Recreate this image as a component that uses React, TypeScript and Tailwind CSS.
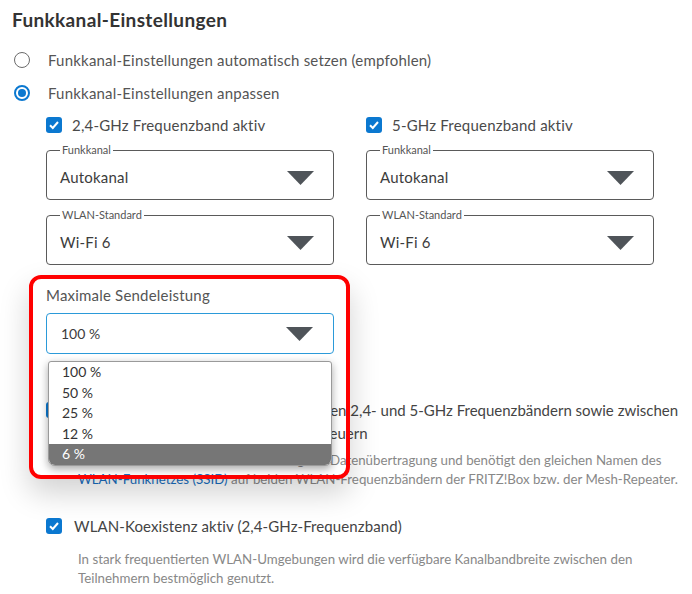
import React from "react";

const font = { fontFamily: "Lato, 'Open Sans', sans-serif" };

const Caret = () => (
  <svg width="27" height="14" viewBox="0 0 27 14" className="shrink-0">
    <polygon points="0,0 27,0 13.5,14" fill="#4f5459" />
  </svg>
);

const Check = () => (
  <span className="flex h-4 w-4 shrink-0 items-center justify-center rounded-[3px] bg-[#0b78d0]">
    <svg width="12" height="12" viewBox="0 0 12 12">
      <path d="M2 6.2 L4.8 9 L10 3" fill="none" stroke="#fff" strokeWidth="2" />
    </svg>
  </span>
);

const Radio = ({ on }: { on?: boolean }) =>
  on ? (
    <span className="flex h-4 w-4 shrink-0 items-center justify-center rounded-full border-2 border-[#0b78d0]">
      <span className="h-2 w-2 rounded-full bg-[#0b78d0]" />
    </span>
  ) : (
    <span className="h-4 w-4 shrink-0 rounded-full border-[1.5px] border-[#6b6b6b]" />
  );

const Field = ({ label, value }: { label: string; value: string }) => (
  <fieldset className="rounded-[4px] border border-[#5a5a5a] px-[13px]">
    <legend className="px-[2px] text-[11px] leading-[12px] text-[#555]">{label}</legend>
    <div className="flex h-[43px] items-center justify-between pr-[6px]">
      <span className="text-[15px] tracking-[0.2px] text-[#3c3c3c]">{value}</span>
      <Caret />
    </div>
  </fieldset>
);

const BandColumn = ({ label }: { label: string }) => (
  <div className="flex w-[288px] flex-col">
    <div className="flex h-[18px] items-center gap-[10px]">
      <Check />
      <span className="text-[15px] tracking-[0.2px] text-[#4a4a4a]">{label}</span>
    </div>
    <div className="mt-[10px]">
      <Field label="Funkkanal" value="Autokanal" />
    </div>
    <div className="mt-[9px]">
      <Field label="WLAN-Standard" value="Wi-Fi 6" />
    </div>
  </div>
);

const options = ["100 %", "50 %", "25 %", "12 %", "6 %"];

export default function App() {
  return (
    <div className="relative h-[594px] w-[692px] overflow-hidden bg-white" style={font}>
      <div className="pl-3 pt-[8px]">
        <h1 className="text-[19px] font-bold leading-[24px] tracking-[0.35px] text-[#333]">
          Funkkanal-Einstellungen
        </h1>
        <div className="mt-[19px] flex flex-col gap-[15px] pl-[2px]">
          <div className="flex h-[18px] items-center gap-[18px]">
            <Radio />
            <span className="text-[15px] tracking-[0.2px] text-[#555]">
              Funkkanal-Einstellungen automatisch setzen (empfohlen)
            </span>
          </div>
          <div className="flex h-[18px] items-center gap-[18px]">
            <Radio on />
            <span className="text-[15px] tracking-[0.2px] text-[#555]">Funkkanal-Einstellungen anpassen</span>
          </div>
        </div>
      </div>

      <div className="pl-[46px]">
        <div className="mt-[14px] flex gap-[32px]">
          <BandColumn label="2,4-GHz Frequenzband aktiv" />
          <BandColumn label="5-GHz Frequenzband aktiv" />
        </div>

        <div className="mt-[20px] w-[288px]">
          <div className="text-[15px] leading-[20px] tracking-[0.2px] text-[#555]">Maximale Sendeleistung</div>
          <div className="mt-[8px] flex h-[41px] items-center justify-between rounded-[4px] border border-[#2b9ad9] pl-[14px] pr-[20px]">
            <span className="text-[14px] text-[#3c3c3c]">100 %</span>
            <Caret />
          </div>
        </div>

        <div className="mt-[45px] flex gap-[12px]">
          <div className="mt-[3px]">
            <Check />
          </div>
          <div className="text-[15px] leading-[23px] text-[#444]">
            WLAN-Geräte automatisch zwischen den 2,4- und 5-GHz Frequenzbändern sowie zwischen
            <br />
            den Zugangspunkten im Mesh direkt steuern
          </div>
        </div>
        <p className="mt-[6px] pl-[32px] text-[13.3px] leading-[19px] text-[#888]">
          Diese Funktion dient der Verbesserung der Datenübertragung und benötigt den gleichen Namen des
          <br />
          <span className="text-[#1a6fc0]">WLAN-Funknetzes (SSID)</span> auf beiden WLAN-Frequenzbändern der
          FRITZ!Box bzw. der Mesh-Repeater.
        </p>

        <div className="mt-[26px] flex items-center gap-[12px]">
          <Check />
          <span className="text-[15px] tracking-[0.1px] text-[#444]">WLAN-Koexistenz aktiv (2,4-GHz-Frequenzband)</span>
        </div>
        <p className="mt-[12px] pl-[32px] text-[13.3px] leading-[19px] text-[#888]">
          In stark frequentierten WLAN-Umgebungen wird die verfügbare Kanalbandbreite zwischen den
          <br />
          Teilnehmern bestmöglich genutzt.
        </p>
      </div>

      {/* annotation highlight */}
      <div className="pointer-events-none absolute left-[29px] top-[275px] h-[204px] w-[321px] rounded-[12px] border-4 border-[#f00] shadow-[0_14px_30px_rgba(0,0,0,0.18)]" />

      {/* open dropdown list */}
      <ul className="absolute left-[48px] top-[361px] w-[284px] overflow-hidden rounded-b-[7px] rounded-t-[3px] border border-[#9a9a9a] bg-white shadow-[0_3px_8px_rgba(0,0,0,0.35)]">
        {options.map((o, i) => (
          <li
            key={o}
            className={
              i === options.length - 1
                ? "h-[20.5px] bg-[#767676] pl-[13px] text-[14px] leading-[20.5px] text-white"
                : "h-[20.5px] pl-[13px] text-[14px] leading-[20.5px] text-[#333]"
            }
          >
            {o}
          </li>
        ))}
      </ul>
    </div>
  );
}
